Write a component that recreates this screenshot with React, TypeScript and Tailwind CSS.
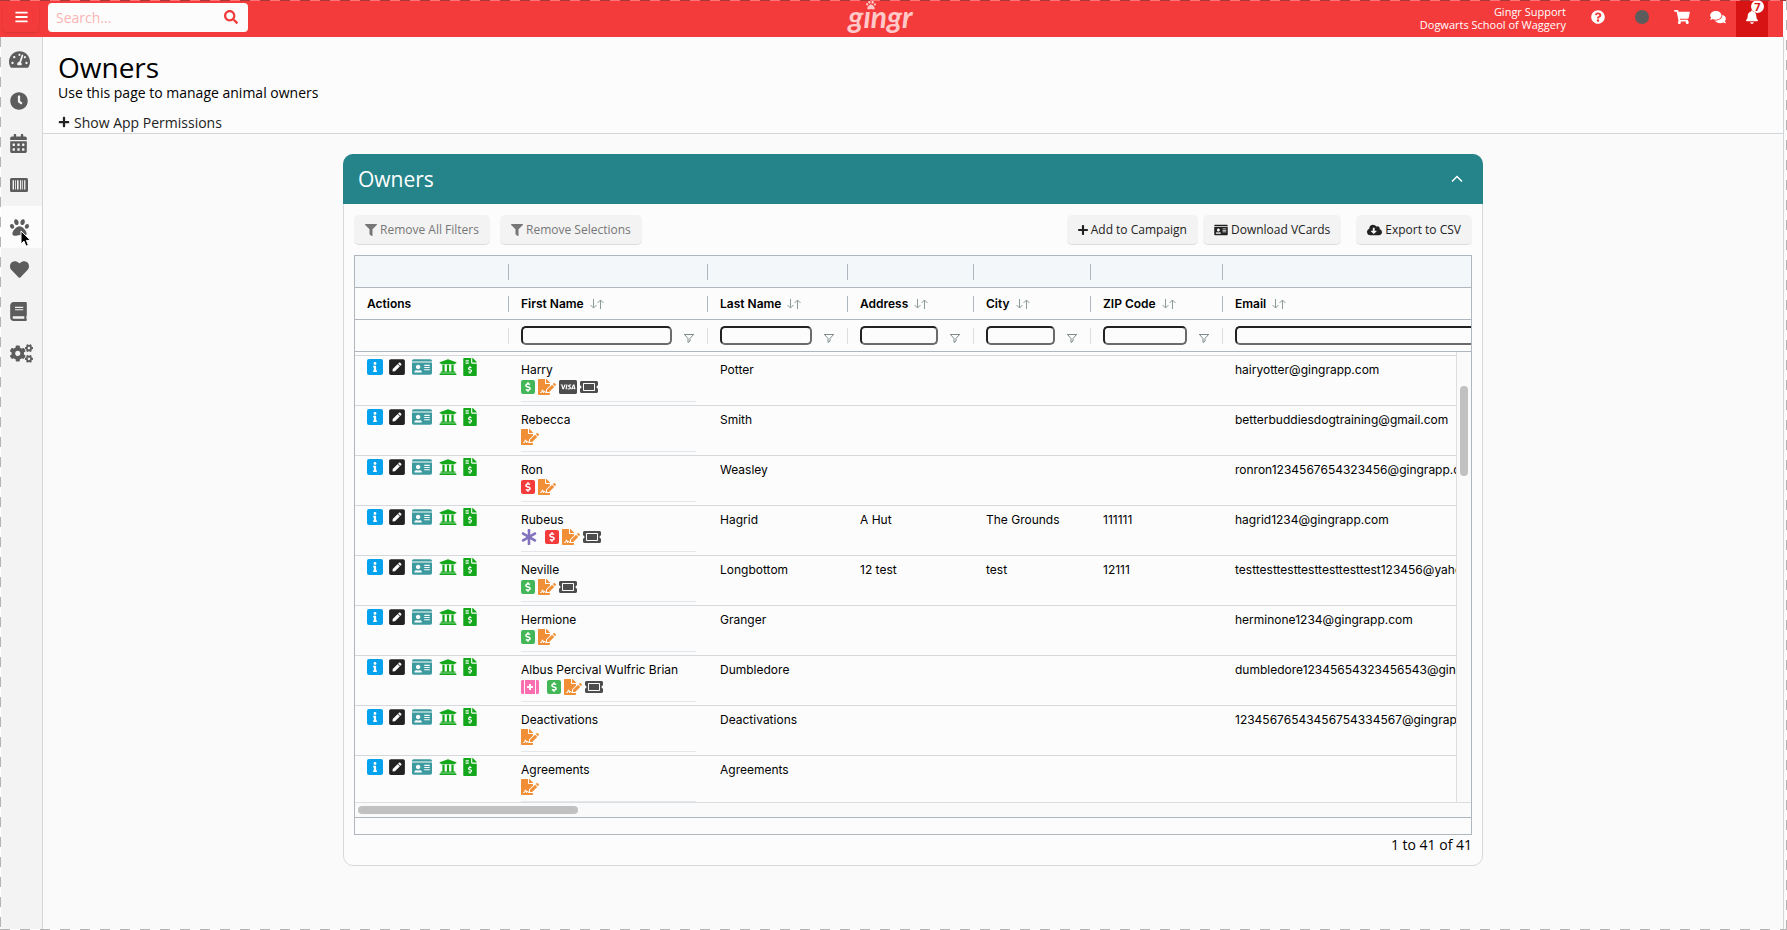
import type { ComponentType, ReactNode } from "react";
import {
  FaAsterisk,
  FaBars,
  FaBell,
  FaBook,
  FaCalendarAlt,
  FaCcVisa,
  FaClock,
  FaCloudDownloadAlt,
  FaCogs,
  FaComments,
  FaDollarSign,
  FaFileInvoiceDollar,
  FaFileSignature,
  FaFilter,
  FaFirstAid,
  FaHeart,
  FaIdCard,
  FaInfo,
  FaPaw,
  FaPenSquare,
  FaPlus,
  FaQuestionCircle,
  FaSearch,
  FaShoppingCart,
  FaTachometerAlt,
  FaTicketAlt,
  FaUniversity,
} from "react-icons/fa";

type Badge = "paid" | "owes" | "agreement" | "visa" | "ticket" | "asterisk" | "aid";

interface Owner {
  first: string;
  last: string;
  address?: string;
  city?: string;
  zip?: string;
  email?: string;
  badges: Badge[];
}

const owners: Owner[] = [
  { first: "Harry", last: "Potter", email: "hairyotter@gingrapp.com", badges: ["paid", "agreement", "visa", "ticket"] },
  { first: "Rebecca", last: "Smith", email: "betterbuddiesdogtraining@gmail.com", badges: ["agreement"] },
  { first: "Ron", last: "Weasley", email: "ronron1234567654323456@gingrapp.com", badges: ["owes", "agreement"] },
  {
    first: "Rubeus",
    last: "Hagrid",
    address: "A Hut",
    city: "The Grounds",
    zip: "111111",
    email: "hagrid1234@gingrapp.com",
    badges: ["asterisk", "owes", "agreement", "ticket"],
  },
  {
    first: "Neville",
    last: "Longbottom",
    address: "12 test",
    city: "test",
    zip: "12111",
    email: "testtesttesttesttesttesttest123456@yahoo.com",
    badges: ["paid", "agreement", "ticket"],
  },
  { first: "Hermione", last: "Granger", email: "herminone1234@gingrapp.com", badges: ["paid", "agreement"] },
  {
    first: "Albus Percival Wulfric Brian",
    last: "Dumbledore",
    email: "dumbledore12345654323456543@gingrapp.com",
    badges: ["aid", "paid", "agreement", "ticket"],
  },
  { first: "Deactivations", last: "Deactivations", email: "12345676543456754334567@gingrapp.com", badges: ["agreement"] },
  { first: "Agreements", last: "Agreements", badges: ["agreement"] },
];

const columns = ["Actions", "First Name", "Last Name", "Address", "City", "ZIP Code", "Email"];

function BarcodeIcon({ className }: { className?: string }) {
  return (
    <svg viewBox="0 0 18 14" className={className} fill="currentColor">
      <path
        fillRule="evenodd"
        d="M1.5 0h15A1.5 1.5 0 0 1 18 1.5v11a1.5 1.5 0 0 1-1.5 1.5h-15A1.5 1.5 0 0 1 0 12.5v-11A1.5 1.5 0 0 1 1.5 0zM2.6 2.2v9.4h1.4V2.2zM5 2.2v9.4h.8V2.2zM7 2.2v9.4h1.6V2.2zM10 2.2v9.4h1.2V2.2zM12.3 2.2v9.4h.7V2.2zM14.1 2.2v9.4h1.3V2.2z"
      />
    </svg>
  );
}

function SortIcon() {
  return (
    <svg viewBox="0 0 14 10" className="h-[10px] w-[14px] shrink-0" fill="none" stroke="#8c9a9a">
      <path d="M3.5 0v9M.5 6l3 3 3-3M10.500 10V1M7.500 4l3-3 3 3" />
    </svg>
  );
}

function FilterOutline() {
  return (
    <svg viewBox="0 0 12 12" className="h-3 w-3" fill="none" stroke="#7f8c8d">
      <path d="M1 2.500h10M1.500 2.500l3.500 4v4l2-1.500V6.500l3.500-4" />
    </svg>
  );
}

const menu: { label: string; icon: ComponentType<{ className?: string }>; size: string }[] = [
  { label: "Dashboard", icon: FaTachometerAlt, size: "h-[19px] w-[21px]" },
  { label: "Time clock", icon: FaClock, size: "h-[18px] w-[18px]" },
  { label: "Calendar", icon: FaCalendarAlt, size: "h-[19px] w-[17px]" },
  { label: "Point of sale", icon: BarcodeIcon, size: "h-[14px] w-[18px]" },
  { label: "Owners and animals", icon: FaPaw, size: "h-[19px] w-[19px]" },
  { label: "Favorites", icon: FaHeart, size: "h-[19px] w-[19px]" },
  { label: "Reports", icon: FaBook, size: "h-[19px] w-[17px]" },
  { label: "Settings", icon: FaCogs, size: "h-[19px] w-[23px]" },
];

function Square({ color, children }: { color: string; children: ReactNode }) {
  return <span className={`flex h-[14px] w-[14px] items-center justify-center rounded-[2px] text-white ${color}`}>{children}</span>;
}

function OwnerBadge({ type }: { type: Badge }) {
  switch (type) {
    case "paid":
      return (
        <Square color="bg-[#43b757]">
          <FaDollarSign className="h-[10px] w-[10px]" />
        </Square>
      );
    case "owes":
      return (
        <Square color="bg-[#f43b3b]">
          <FaDollarSign className="h-[10px] w-[10px]" />
        </Square>
      );
    case "agreement":
      return <FaFileSignature className="h-4 w-[18px] text-[#f08f36]" />;
    case "visa":
      return <FaCcVisa className="h-4 w-[18px] text-[#4d4d4d]" />;
    case "ticket":
      return <FaTicketAlt className="h-4 w-[18px] text-[#4d4d4d]" />;
    case "asterisk":
      return <FaAsterisk className="mr-[5px] h-4 w-4 text-[#8272bd]" />;
    case "aid":
      return <FaFirstAid className="mr-[5px] h-4 w-[18px] text-[#fb6fb0]" />;
  }
}

function RowActions() {
  return (
    <div className="flex items-center">
      <a href="#info" aria-label="Info" className="mr-[6px] flex h-4 w-4 items-center justify-center rounded-[2px] bg-[#06a2ee] text-white">
        <FaInfo className="h-[10px] w-[10px]" />
      </a>
      <a href="#edit" aria-label="Edit" className="mr-[7px] text-[#222]">
        <FaPenSquare className="h-[18px] w-4" />
      </a>
      <a href="#card" aria-label="Contact card" className="mr-[7px] text-[#3d9ba0]">
        <FaIdCard className="h-[18px] w-5" />
      </a>
      <a href="#account" aria-label="Account" className="mr-[6px] text-[#14a71c]">
        <FaUniversity className="h-[18px] w-[18px]" />
      </a>
      <a href="#invoice" aria-label="Invoice" className="text-[#14a71c]">
        <FaFileInvoiceDollar className="h-[18px] w-[14px]" />
      </a>
    </div>
  );
}

function ToolButton({ icon, muted, children }: { icon: ReactNode; muted?: boolean; children: ReactNode }) {
  return (
    <button
      type="button"
      className={`flex h-[30px] items-center gap-[3px] rounded-[5px] border-b border-[#dcdcdc] bg-[#f3f3f3] px-[11px] text-[12px] whitespace-nowrap ${
        muted ? "text-[#777]" : "text-[#222]"
      }`}
    >
      {icon}
      {children}
    </button>
  );
}

function Columns() {
  return (
    <colgroup>
      <col className="w-[154px]" />
      <col className="w-[199px]" />
      <col className="w-[140px]" />
      <col className="w-[126px]" />
      <col className="w-[117px]" />
      <col className="w-[132px]" />
      <col className="w-[350px]" />
    </colgroup>
  );
}

function OwnersGrid() {
  return (
    <div className="overflow-hidden border border-[#b0b6bd] font-[Inter,sans-serif] text-[12px] text-black">
      <table className="w-[1218px] table-fixed border-separate border-spacing-0">
        <Columns />
        <thead>
          <tr className="h-8 bg-[#f4f7f9]">
            {columns.map((c) => (
              <td key={c} className="border-b border-[#b0b6bd] p-0">
                <span className="ml-auto block h-4 w-px bg-[#b0b6bd]" />
              </td>
            ))}
          </tr>
          <tr className="h-8">
            {columns.map((c) => (
              <th key={c} scope="col" className="border-b border-[#b0b6bd] p-0 pl-3 text-left font-semibold">
                <span className="flex items-center gap-[6px]">
                  {c}
                  {c !== "Actions" && <SortIcon />}
                  <span className="ml-auto h-4 w-px bg-[#b0b6bd]" />
                </span>
              </th>
            ))}
          </tr>
          <tr className="h-8">
            {columns.map((c) => (
              <td key={c} className="border-b border-[#b0b6bd] p-0 pl-3">
                <div className="flex items-center">
                  {c !== "Actions" && (
                    <>
                      <input
                        type="text"
                        aria-label={`Filter by ${c}`}
                        className="mr-[11px] h-[19px] min-w-0 flex-1 rounded-[5px] border-2 border-t-[#222] border-r-[#6b6b6b] border-b-[#6b6b6b] border-l-[#222] px-1"
                      />
                      <button type="button" aria-label={`${c} filter menu`} className="mr-3 pt-1">
                        <FilterOutline />
                      </button>
                    </>
                  )}
                  <span className="ml-auto h-4 w-px bg-[#dcdfe2]" />
                </div>
              </td>
            ))}
          </tr>
        </thead>
      </table>

      <div className="flex h-[450px]">
        <div className="min-w-0 flex-1 overflow-hidden pt-[3px]">
          <table className="w-[1218px] table-fixed border-separate border-spacing-0 border-t border-[#d6d9dc]">
            <Columns />
            <tbody>
              {owners.map((o) => (
                <tr key={o.first} className="h-[50px] align-top *:border-b *:border-[#d6d9dc] *:p-0 *:pl-3">
                  <td>
                    <div className="pt-[2px]">
                      <RowActions />
                    </div>
                  </td>
                  <td>
                    <div className="mr-3 h-[46px] border-b border-[#e4e7e9] pt-[6px]">
                      <div className="leading-4">{o.first}</div>
                      <div className="flex h-[18px] items-center gap-[3px]">
                        {o.badges.map((b) => (
                          <OwnerBadge key={b} type={b} />
                        ))}
                      </div>
                    </div>
                  </td>
                  {[o.last, o.address, o.city, o.zip, o.email].map((value, i) => (
                    <td key={i}>
                      <div className="pt-[6px] leading-4 whitespace-nowrap">{value}</div>
                    </td>
                  ))}
                </tr>
              ))}
            </tbody>
          </table>
        </div>
        <div className="w-[15px] border-l border-[#dcdfe2] bg-[#fafafa] pt-[34px]">
          <div className="mx-auto h-[90px] w-2 rounded-full bg-[#c1c1c1]" />
        </div>
      </div>

      <div className="flex h-4 items-center border-t border-b border-t-[#dcdfe2] border-b-[#b0b6bd] bg-[#fafafa] pl-[3px]">
        <div className="h-2 w-[220px] rounded-full bg-[#c1c1c1]" />
      </div>
      <div className="h-4" />
    </div>
  );
}

function Logo() {
  return (
    <a href="#home" aria-label="gingr" className="relative flex h-[37px] items-center pr-[10px] text-[#ffc9c9]">
      <FaPaw className="absolute top-0 left-[18px] h-[10px] w-[10px]" />
      <span className="pb-[6px] font-[Lato,sans-serif] text-[30px] leading-7 font-bold italic">gıngr</span>
    </a>
  );
}

function TopBar() {
  return (
    <header className="mr-1 flex h-[37px] items-center justify-between bg-[#f43b3b] text-white">
      <div className="flex flex-1 items-center gap-[9px] pb-[3px] pl-[3px]">
        <button type="button" aria-label="Menu" className="flex h-[30px] w-9 items-center justify-center rounded-[4px] shadow-sm">
          <FaBars className="h-[14px] w-[13px]" />
        </button>
        <label className="flex h-[29px] w-[200px] items-center rounded-[4px] bg-[#fcfcfc] pr-[10px] pl-2">
          <input
            type="search"
            aria-label="Search"
            placeholder="Search..."
            className="min-w-0 flex-1 text-[14px] text-[#f43b3b] outline-none placeholder:text-[#fbb4b4]"
          />
          <FaSearch className="h-[14px] w-[14px] text-[#f43b3b]" />
        </label>
      </div>
      <Logo />
      <div className="flex flex-1 items-center justify-end pr-[15px]">
        <div className="mr-[25px] pb-[2px] text-right text-[11px] leading-[13px] font-medium">
          Gingr Support
          <br />
          Dogwarts School of Waggery
        </div>
        <button type="button" aria-label="Help" className="mr-[30px] pb-[3px]">
          <FaQuestionCircle className="h-[14px] w-[14px]" />
        </button>
        <span className="mr-[25px] mb-[3px] h-[14px] w-[14px] rounded-full bg-[#5c5c5c]" />
        <button type="button" aria-label="Cart" className="mr-5 pb-[3px]">
          <FaShoppingCart className="h-[14px] w-4" />
        </button>
        <button type="button" aria-label="Messages" className="mr-[10px] pb-[3px]">
          <FaComments className="h-[14px] w-4" />
        </button>
        <button type="button" aria-label="Notifications" className="relative flex h-[37px] w-8 items-center justify-center bg-[#d71313] pb-1">
          <FaBell className="h-[14px] w-3" />
          <span className="absolute top-0 right-1 h-[13px] w-[13px] rounded-full bg-white text-[11px] leading-[13px] font-bold text-[#d71313]">
            7
          </span>
        </button>
      </div>
    </header>
  );
}

function Sidebar() {
  return (
    <nav className="w-[43px] shrink-0 border-r border-[#d3d6d8] bg-[#f3f3f3] pt-px">
      {menu.map(({ label, icon: Icon, size }) => (
        <a
          key={label}
          href="#menu"
          aria-label={label}
          className={`relative flex h-[42px] items-center text-[#5c5c5c] ${label === "Dashboard" ? "pl-[9px]" : "pl-[10px]"} ${
            label === "Owners and animals" ? "bg-[#fcfcfc]" : ""
          }`}
        >
          <Icon className={size} />
          {label === "Owners and animals" && (
            <svg viewBox="0 0 12 18" className="absolute top-6 left-5 h-[18px] w-3">
              <path d="M1 1v13l3-2.800 2 5 2.400-1-2-4.800h4.200z" fill="#000" stroke="#fff" />
            </svg>
          )}
        </a>
      ))}
    </nav>
  );
}

// Dashed outline that runs round the whole window
function DashedFrame() {
  return (
    <div aria-hidden className="pointer-events-none">
      <span className="fixed top-0 left-0 h-px w-full bg-[repeating-linear-gradient(90deg,#a8393a_0_10px,#ff7474_10px_20px)]" />
      <span className="fixed top-[37px] bottom-0 left-0 w-px bg-[repeating-linear-gradient(#b4b4b4_0_10px,#fff_10px_20px)]" />
      <span className="fixed top-0 right-0 bottom-0 w-px bg-[repeating-linear-gradient(#b4b4b4_0_10px,#fff_10px_20px)]" />
      <span className="fixed bottom-0 left-0 h-px w-full bg-[repeating-linear-gradient(90deg,#b4b4b4_0_10px,#fff_10px_20px)]" />
    </div>
  );
}

export default function App() {
  return (
    <div className="flex min-h-screen flex-col bg-[#fafafa] font-['Open_Sans',sans-serif] text-black">
      <TopBar />
      <div className="mr-[3px] flex flex-1 border-r border-[#d3d6d8]">
        <Sidebar />
        <div className="min-w-0 flex-1">
          <div className="border-b border-[#d3d6d8] bg-[#fcfcfc] pt-3 pb-px pl-[15px]">
            <h1 className="text-[28px] leading-9">Owners</h1>
            <p className="text-[14px] leading-4">Use this page to manage animal owners</p>
            <button type="button" className="mt-[11px] flex h-5 items-center gap-1 text-[14px] text-[#222]">
              <FaPlus className="h-3 w-3" />
              Show App Permissions
            </button>
          </div>

          <section className="mx-auto mt-5 max-w-[1140px] rounded-[10px] border border-[#d6d9dc] bg-[#fcfcfc]">
            <div className="-mx-px -mt-px flex h-[50px] items-center justify-between rounded-t-[10px] bg-[#248489] pr-5 pl-[15px] text-white">
              <h2 className="pt-px text-[21px]">Owners</h2>
              <button type="button" aria-label="Collapse">
                <svg viewBox="0 0 12 8" className="h-2 w-3" fill="none" stroke="currentColor" strokeWidth="1.500">
                  <path d="M1 6.500l5-5 5 5" />
                </svg>
              </button>
            </div>
            <div className="px-[10px] pt-[11px]">
              <div className="mb-[10px] flex items-center">
                <ToolButton muted icon={<FaFilter className="h-3 w-3" />}>
                  Remove All Filters
                </ToolButton>
                <div className="ml-[10px]">
                  <ToolButton muted icon={<FaFilter className="h-3 w-3" />}>
                    Remove Selections
                  </ToolButton>
                </div>
                <div className="ml-auto flex gap-[5px]">
                  <ToolButton icon={<FaPlus className="h-3 w-[10px]" />}>Add to Campaign</ToolButton>
                  <ToolButton icon={<FaIdCard className="h-3 w-[14px]" />}>Download VCards</ToolButton>
                </div>
                <div className="ml-[15px]">
                  <ToolButton icon={<FaCloudDownloadAlt className="h-3 w-[15px]" />}>Export to CSV</ToolButton>
                </div>
              </div>
              <OwnersGrid />
              <p className="pb-[10px] text-right text-[14px] leading-5">1 to 41 of 41</p>
            </div>
          </section>
        </div>
      </div>
      <DashedFrame />
    </div>
  );
}
